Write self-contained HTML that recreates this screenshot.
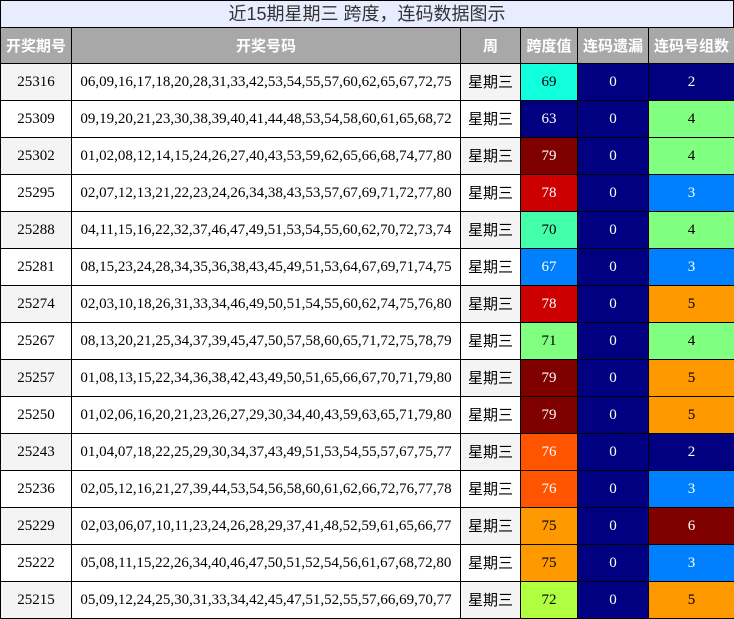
<!DOCTYPE html>
<html><head><meta charset="utf-8"><style>
body{margin:0;width:734px;height:618px;overflow:hidden;background:#fff;font-family:"Liberation Serif","Noto Serif CJK SC",serif;}
.title{position:absolute;left:0;top:0;width:732px;height:26px;border:1px solid #000;background:#e8ecff;text-align:center;font:18px/26px "Liberation Sans","Noto Sans CJK SC",sans-serif;color:#333;}
table{position:absolute;left:0;top:27px;border-collapse:collapse;table-layout:fixed;width:734px;}
td,th{border:1.5px solid #000;text-align:center;padding:0;font-size:15px;line-height:16px;}
tr{height:37px;}
tr.h{height:36px;}
th{background:#a8a8a8;color:#fff;font:bold 15px/16px "Noto Sans CJK SC",sans-serif;}
td.w{font-family:"Noto Sans CJK SC",sans-serif;}
tr:nth-child(even) td.g{background:#f4f4f4;}
.wt{color:#fff}
</style></head><body>
<div class="title">近15期星期三 跨度，连码数据图示</div>
<table>
<colgroup><col style="width:71px"><col style="width:389px"><col style="width:60px"><col style="width:57px"><col style="width:71px"><col style="width:86px"></colgroup>
<tr class="h"><th>开奖期号</th><th>开奖号码</th><th>周</th><th>跨度值</th><th>连码遗漏</th><th>连码号组数</th></tr>
<tr><td class="g">25316</td><td>06,09,16,17,18,20,28,31,33,42,53,54,55,57,60,62,65,67,72,75</td><td class="g w">星期三</td><td style="background:#11ffdd">69</td><td class="wt" style="background:#000080">0</td><td class="wt" style="background:#000080">2</td></tr>
<tr><td class="g">25309</td><td>09,19,20,21,23,30,38,39,40,41,44,48,53,54,58,60,61,65,68,72</td><td class="g w">星期三</td><td class="wt" style="background:#000080">63</td><td class="wt" style="background:#000080">0</td><td style="background:#80ff80">4</td></tr>
<tr><td class="g">25302</td><td>01,02,08,12,14,15,24,26,27,40,43,53,59,62,65,66,68,74,77,80</td><td class="g w">星期三</td><td class="wt" style="background:#800000">79</td><td class="wt" style="background:#000080">0</td><td style="background:#80ff80">4</td></tr>
<tr><td class="g">25295</td><td>02,07,12,13,21,22,23,24,26,34,38,43,53,57,67,69,71,72,77,80</td><td class="g w">星期三</td><td class="wt" style="background:#cc0000">78</td><td class="wt" style="background:#000080">0</td><td class="wt" style="background:#0080ff">3</td></tr>
<tr><td class="g">25288</td><td>04,11,15,16,22,32,37,46,47,49,51,53,54,55,60,62,70,72,73,74</td><td class="g w">星期三</td><td style="background:#44ffaa">70</td><td class="wt" style="background:#000080">0</td><td style="background:#80ff80">4</td></tr>
<tr><td class="g">25281</td><td>08,15,23,24,28,34,35,36,38,43,45,49,51,53,64,67,69,71,74,75</td><td class="g w">星期三</td><td class="wt" style="background:#0080ff">67</td><td class="wt" style="background:#000080">0</td><td class="wt" style="background:#0080ff">3</td></tr>
<tr><td class="g">25274</td><td>02,03,10,18,26,31,33,34,46,49,50,51,54,55,60,62,74,75,76,80</td><td class="g w">星期三</td><td class="wt" style="background:#cc0000">78</td><td class="wt" style="background:#000080">0</td><td style="background:#ff9900">5</td></tr>
<tr><td class="g">25267</td><td>08,13,20,21,25,34,37,39,45,47,50,57,58,60,65,71,72,75,78,79</td><td class="g w">星期三</td><td style="background:#80ff80">71</td><td class="wt" style="background:#000080">0</td><td style="background:#80ff80">4</td></tr>
<tr><td class="g">25257</td><td>01,08,13,15,22,34,36,38,42,43,49,50,51,65,66,67,70,71,79,80</td><td class="g w">星期三</td><td class="wt" style="background:#800000">79</td><td class="wt" style="background:#000080">0</td><td style="background:#ff9900">5</td></tr>
<tr><td class="g">25250</td><td>01,02,06,16,20,21,23,26,27,29,30,34,40,43,59,63,65,71,79,80</td><td class="g w">星期三</td><td class="wt" style="background:#800000">79</td><td class="wt" style="background:#000080">0</td><td style="background:#ff9900">5</td></tr>
<tr><td class="g">25243</td><td>01,04,07,18,22,25,29,30,34,37,43,49,51,53,54,55,57,67,75,77</td><td class="g w">星期三</td><td class="wt" style="background:#ff5500">76</td><td class="wt" style="background:#000080">0</td><td class="wt" style="background:#000080">2</td></tr>
<tr><td class="g">25236</td><td>02,05,12,16,21,27,39,44,53,54,56,58,60,61,62,66,72,76,77,78</td><td class="g w">星期三</td><td class="wt" style="background:#ff5500">76</td><td class="wt" style="background:#000080">0</td><td class="wt" style="background:#0080ff">3</td></tr>
<tr><td class="g">25229</td><td>02,03,06,07,10,11,23,24,26,28,29,37,41,48,52,59,61,65,66,77</td><td class="g w">星期三</td><td style="background:#ff9900">75</td><td class="wt" style="background:#000080">0</td><td class="wt" style="background:#800000">6</td></tr>
<tr><td class="g">25222</td><td>05,08,11,15,22,26,34,40,46,47,50,51,52,54,56,61,67,68,72,80</td><td class="g w">星期三</td><td style="background:#ff9900">75</td><td class="wt" style="background:#000080">0</td><td class="wt" style="background:#0080ff">3</td></tr>
<tr><td class="g">25215</td><td>05,09,12,24,25,30,31,33,34,42,45,47,51,52,55,57,66,69,70,77</td><td class="g w">星期三</td><td style="background:#b0ff40">72</td><td class="wt" style="background:#000080">0</td><td style="background:#ff9900">5</td></tr>
</table>
</body></html>
